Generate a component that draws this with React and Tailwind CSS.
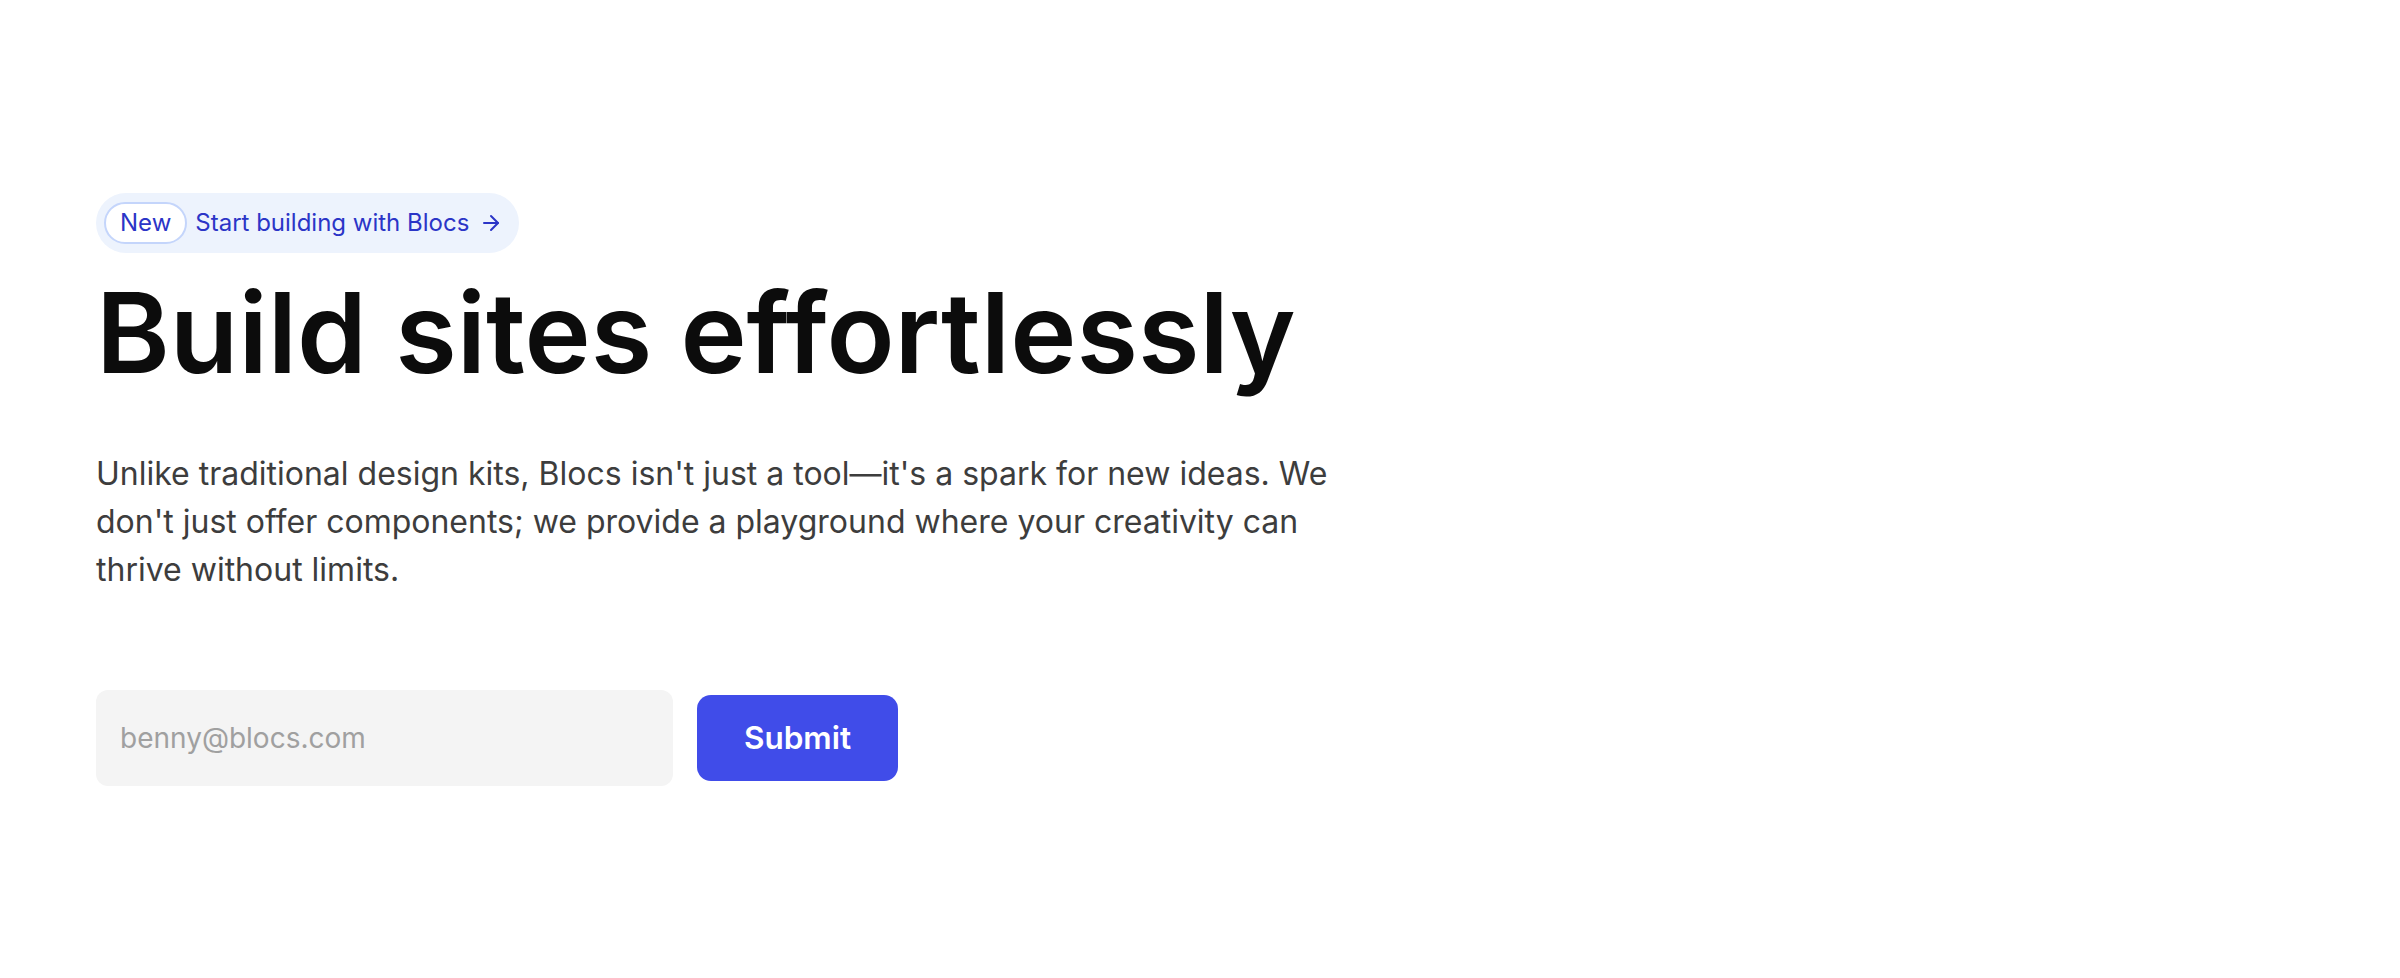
import { ArrowRight } from 'lucide-react';

export default function App() {
  return (
    <div className="flex min-h-screen flex-col justify-center bg-white px-24 font-['Inter',sans-serif]">
      <a
        href="#"
        className="flex w-fit items-center gap-2 rounded-full bg-[#edf3fd] py-[9px] pl-2 pr-[16px] text-[24px] text-[#2b35c7]"
      >
        <span className="rounded-full border-2 border-[#c4d5fb] bg-white px-[14px] py-[3px] leading-[32px]">New</span>
        <span className="flex items-center gap-[10px] leading-[32px]">
          Start building with Blocs
          <ArrowRight className="h-6 w-6" strokeWidth={2} />
        </span>
      </a>

      <h1 className="mt-[23px] text-[112px] font-semibold leading-none text-[#0c0c0c]">
        Build sites effortlessly
      </h1>

      <p className="mt-[62px] max-w-[1260px] text-[32px] leading-[48px] text-[#3d3d3d]">
        Unlike traditional design kits, Blocs isn't just a tool—it's a spark for new ideas. We don't just offer
        components; we provide a playground where your creativity can thrive without limits.
      </p>

      <form className="mt-[96px] flex items-center gap-6" onSubmit={(e) => e.preventDefault()}>
        <input
          type="email"
          placeholder="benny@blocs.com"
          className="h-[96px] w-[577px] rounded-xl bg-[#f4f4f4] px-6 text-[28px] text-[#222] outline-none placeholder:text-[#a0a0a0]"
        />
        <button
          type="submit"
          className="h-[86px] w-[201px] rounded-[14px] bg-[#404ce9] text-[31.5px] font-semibold text-white"
        >
          Submit
        </button>
      </form>
    </div>
  );
}
